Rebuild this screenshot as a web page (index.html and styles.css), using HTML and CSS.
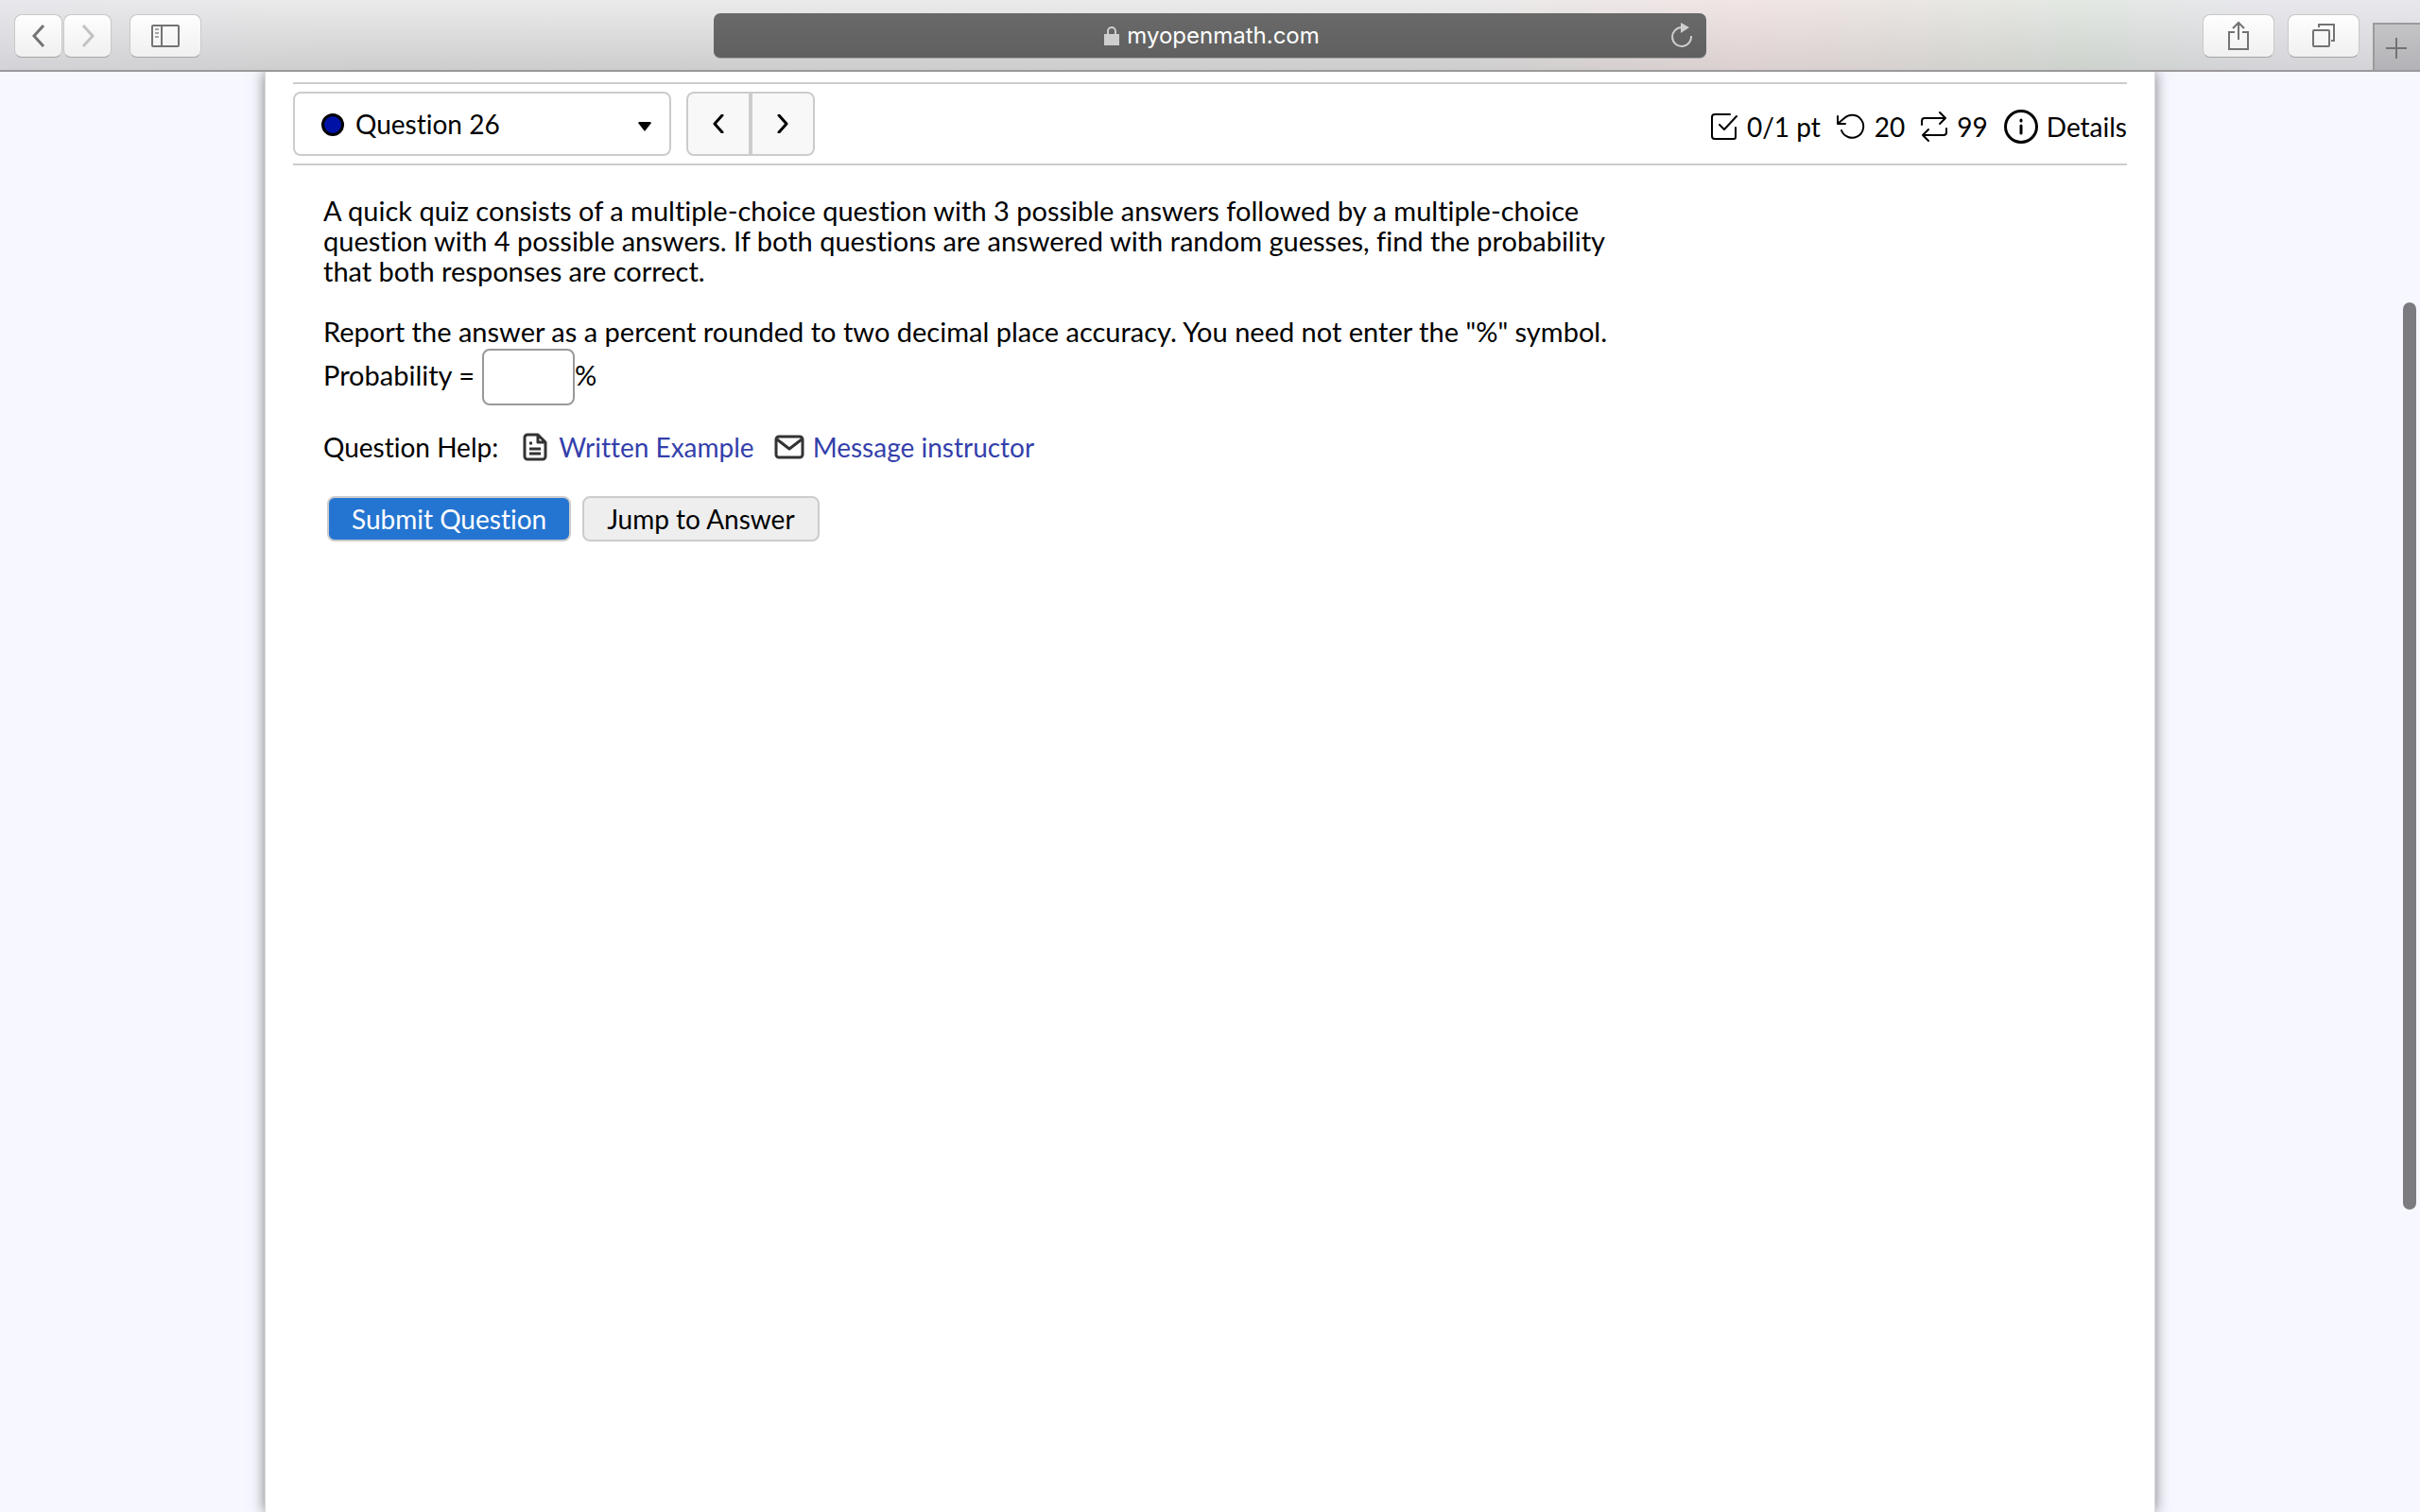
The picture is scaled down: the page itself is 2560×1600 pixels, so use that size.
FILE: index.html
```
<!DOCTYPE html>
<html lang="en">
<head>
<meta charset="UTF-8">
<meta name="viewport" content="width=device-width, initial-scale=1.0">
<title>MyOpenMath</title>
<link rel="stylesheet" href="styles.css">
</head>
<body>
    <header class="toolbar">
        <div class="tools-left">
            <div class="history">
                <button class="tool nav" aria-label="Back"><svg width="16" height="26" viewBox="0 0 16 26"><path d="M13 2 3 13l10 11" stroke-width="3"/></svg></button>
                <button class="tool nav off" aria-label="Forward"><svg width="16" height="26" viewBox="0 0 16 26"><path d="M3 2l10 11L3 24" stroke-width="3"/></svg></button>
            </div>
            <button class="tool" aria-label="Show sidebar"><svg width="30" height="24" viewBox="0 0 30 24"><rect x="1" y="1" width="28" height="22" rx="1"/><path d="M11 1v22"/><path class="faint" d="M4 5h4M4 9h4M4 13h4"/></svg></button>
        </div>
        <div class="address">
            <svg class="lock" width="16" height="20" viewBox="0 0 16 20"><path d="M4 9V5a4 4 0 0 1 8 0v4" fill="none" stroke="#cecece" stroke-width="2"/><rect y="8" width="16" height="12" fill="#cecece"/></svg>
            <span class="domain">myopenmath.com</span>
            <button class="reload" aria-label="Reload"><svg width="24" height="28" viewBox="0 0 24 28"><path d="M22 15A10 10 0 1 1 12 6" fill="none" stroke="#cecece" stroke-width="2"/><path d="M11 1v11l9-6z" fill="#cecece"/></svg></button>
        </div>
        <div class="tools-right">
            <button class="tool" aria-label="Share"><svg width="24" height="32" viewBox="0 0 24 32"><path d="M8 12H2v18h20V12h-6M12 20V2M6 8l6-6 6 6"/></svg></button>
            <button class="tool" aria-label="Show tabs"><svg width="24" height="26" viewBox="0 0 24 26"><rect x="1" y="7" width="17" height="17" rx="1"/><path d="M7 4V1h16v17h-3"/></svg></button>
            <button class="new-tab" aria-label="New tab"><svg width="22" height="22" viewBox="0 0 22 22"><path d="M11 0v22M0 11h22"/></svg></button>
        </div>
    </header>

    <main class="page">
        <div class="question-bar">
            <div class="picker">
                <span class="dot"></span>
                <select class="question-select" aria-label="Select question">
                    <option>Question 26</option>
                </select>
                <svg class="arrow" width="14" height="10" viewBox="0 0 14 10"><path d="M0 1 1 0h12l1 1-7 9z"/></svg>
            </div>
            <div class="pager">
                <button aria-label="Previous question"><svg width="12" height="20" viewBox="0 0 12 20"><path d="M10 1 2 10l8 9"/></svg></button>
                <button aria-label="Next question"><svg width="12" height="20" viewBox="0 0 12 20"><path d="M2 1l8 9-8 9"/></svg></button>
            </div>
            <ul class="stats">
                <li>
                    <svg width="28" height="28" viewBox="0 0 28 28"><path d="M20 1H4a3 3 0 0 0-3 3v20a3 3 0 0 0 3 3h20a2 2 0 0 0 2-2V15M9 12l5 5L27 3"/></svg>
                    0/1 pt
                </li>
                <li>
                    <svg width="30" height="28" viewBox="0 0 30 28"><path d="M1 3v8h8M1 11l7-6a12 12 0 1 1-3 13"/></svg>
                    20
                </li>
                <li>
                    <svg width="28" height="32" viewBox="0 0 28 32"><path d="M1 14v-4a3 3 0 0 1 3-3h22M20 1l6 6-6 6M27 18v4a3 3 0 0 1-3 3H2M8 19l-6 6 6 6"/></svg>
                    99
                </li>
                <li>
                    <button class="details"><svg width="36" height="36" viewBox="0 0 36 36"><circle cx="18" cy="18" r="16.500"/><path d="M18 17v8M18 11v1"/></svg>Details</button>
                </li>
            </ul>
        </div>

        <form class="question">
            <p>A quick quiz consists of a multiple-choice question with 3 possible answers followed by a multiple-choice question with 4 possible answers. If both questions are answered with random guesses, find the probability that both responses are correct.</p>
            <p class="report">Report the answer as a percent rounded to two decimal place accuracy. You need not enter the "%" symbol.</p>
            <div class="answer">
                <label for="probability">Probability =</label>
                <input type="text" id="probability"><span>%</span>
            </div>
            <div class="help">
                <span class="help-title">Question Help:</span>
                <a href="#"><svg width="26" height="30" viewBox="0 0 26 30"><path d="M16 2H5a3 3 0 0 0-3 3v20a3 3 0 0 0 3 3h16a3 3 0 0 0 3-3V10zM16 2v8h8M7 11h3M7 17h12M7 22h12"/></svg>Written Example</a>
                <a class="message" href="#"><svg width="30" height="24" viewBox="0 0 30 24"><rect x="1" y="1" width="28" height="22" rx="3"/><path d="M2 4l13 10L28 4"/></svg>Message instructor</a>
            </div>
            <div class="actions">
                <button type="button" class="btn primary">Submit Question</button>
                <button type="button" class="btn">Jump to Answer</button>
            </div>
        </form>
    </main>
    <div class="scroll-thumb"></div>
</body>
</html>
```
FILE: styles.css
```
*{
    box-sizing: border-box;
}
body{
    margin: 0;
    min-height: 100vh;
    display: flex;
    flex-direction: column;
    background: #f7f7ff;
    color: #000;
    font-family: Lato, "Trebuchet MS", sans-serif;
    font-size: 28px;
    font-variant-ligatures: none;
    line-height: 32px;
    overflow: hidden;
}
button, input, select{
    font: inherit;
    font-variant-ligatures: none;
    color: inherit;
    margin: 0;
}
button{
    padding: 0;
    border: 0;
    background: none;
}
svg{
    display: block;
    flex: none;
    fill: none;
    stroke-width: 2;
}

/* browser toolbar */
.toolbar{
    position: relative;
    height: 76px;
    flex: none;
    display: grid;
    grid-template-columns: 1fr minmax(0, 1050px) 1fr;
    align-items: center;
    padding-top: 2px;
    border-bottom: 2px solid #9b999b;
    background:
        linear-gradient(90deg, rgba(225,225,240,.3), rgba(230,230,230,0) 15%, rgba(230,230,230,0) 60%, rgba(255,215,215,.3) 72%, rgba(205,225,205,.25) 86%, rgba(225,225,240,.3) 93%),
        linear-gradient(#ebebeb, #cdcdcd);
}
.tools-left, .tools-right{
    display: flex;
    align-items: center;
}
.tools-left{
    padding-left: 15px;
    gap: 19px;
}
.tools-right{
    height: 100%;
    justify-content: flex-end;
    gap: 14px;
}
.history{
    display: flex;
    gap: 1px;
}
.tool{
    width: 76px;
    height: 46px;
    display: flex;
    align-items: center;
    justify-content: center;
    border: 1px solid #c8c8c8;
    border-bottom-color: #a5a5a5;
    border-radius: 8px;
    background: linear-gradient(#fefefe, #f0f0f0);
}
.tool svg, .new-tab svg{
    stroke: #737373;
}
.tool.nav{
    width: 51px;
}
.tool.off svg{
    stroke: #c2c2c2;
}
.tool .faint{
    stroke: #a5a5a5;
}
.address{
    height: 48px;
    display: flex;
    align-items: center;
    justify-content: center;
    gap: 8px;
    position: relative;
    padding-left: 4px;
    border-radius: 7px;
    background: linear-gradient(#696969, #606060);
    border-bottom: 1px solid #a5a5a5;
    color: #fff;
    font-family: Inter, sans-serif;
    font-size: 24px;
}
.reload{
    position: absolute;
    right: 14px;
    top: 9px;
}
.new-tab{
    width: 50px;
    height: 50px;
    align-self: flex-end;
    padding: 2px 0 0 12px;
    border: 2px solid #9b999b;
    border-width: 2px 0 0 2px;
    background: linear-gradient(#c4c3c6, #b3b2b6);
}

/* assessment page */
.page{
    width: calc(100% - 560px);
    flex: 1;
    margin: 0 auto;
    padding: 11px 29px 0;
    background: #fff;
    border: 1px solid #dadadc;
    border-width: 0 1px;
    box-shadow: 0 0 14px #7b7b81;
}
.question-bar{
    height: 88px;
    display: flex;
    align-items: center;
    gap: 16px;
    border-top: 2px solid #ccc;
    border-bottom: 2px solid #ccc;
}
.picker{
    position: relative;
    width: 400px;
}
.question-select{
    display: block;
    width: 100%;
    height: 68px;
    padding: 0 40px 0 64px;
    appearance: none;
    background: #fff;
    border: 2px solid #ccc;
    border-radius: 8px;
}
.dot{
    position: absolute;
    left: 30px;
    top: 23px;
    width: 24px;
    height: 24px;
    border: 3px solid #000;
    border-radius: 50%;
    background: #0012a5;
    pointer-events: none;
}
.arrow{
    position: absolute;
    right: 21px;
    top: 32px;
    fill: #000;
    pointer-events: none;
}
.pager{
    display: flex;
}
.pager button{
    width: 68px;
    height: 68px;
    display: flex;
    align-items: center;
    justify-content: center;
    background: #f8f8f8;
    border: 2px solid #ccc;
}
.pager button:first-child{
    border-radius: 8px 0 0 8px;
}
.pager button:last-child{
    border-radius: 0 8px 8px 0;
}
.pager svg, .stats svg{
    stroke: #000;
    stroke-width: 2;
    stroke-linecap: round;
    stroke-linejoin: round;
}
.pager svg, .details svg{
    stroke-width: 3;
}
.stats svg{
    overflow: visible;
}
.stats{
    display: flex;
    align-items: center;
    gap: 17px;
    margin: 4px 0 0 auto;
    padding: 0;
    list-style: none;
}
.stats li, .details{
    display: flex;
    align-items: center;
    gap: 10px;
}
.stats li{
    padding-top: 2px;
}
.details{
    gap: 9px;
}
.question{
    padding: 32px 0 0 32px;
}
.question p{
    max-width: 1360px;
    margin: 0 0 32px;
    font-size: 29px;
}
.question .report{
    margin: 0 0 2px;
}
.answer{
    display: flex;
    align-items: center;
    font-size: 29px;
}
.answer label, .answer span{
    padding-bottom: 4px;
}
.answer input{
    width: 98px;
    height: 60px;
    margin-left: 8px;
    padding: 4px 8px;
    border: 2px solid #999;
    border-radius: 8px;
    background: #fff;
}
.help{
    display: flex;
    align-items: center;
    margin-top: 28px;
}
.help-title{
    margin-right: 26px;
}
.help a{
    display: flex;
    align-items: center;
    gap: 12px;
    margin-right: 22px;
    color: #343fab;
    text-decoration: none;
}
.help .message{
    gap: 10px;
}
.help svg{
    overflow: visible;
    stroke: #333;
    stroke-width: 3;
    stroke-linejoin: round;
}
.actions{
    display: flex;
    gap: 12px;
    margin-top: 36px;
    padding-left: 4px;
}
.btn{
    height: 48px;
    padding: 0 24px;
    border: 2px solid #ccc;
    border-radius: 8px;
    background: #eee;
}
.btn.primary{
    background: #2475d1;
    color: #fff;
}
.scroll-thumb{
    position: fixed;
    right: 4px;
    top: 20%;
    width: 14px;
    height: 60%;
    border-radius: 7px;
    background: #7c7b80;
}
```
